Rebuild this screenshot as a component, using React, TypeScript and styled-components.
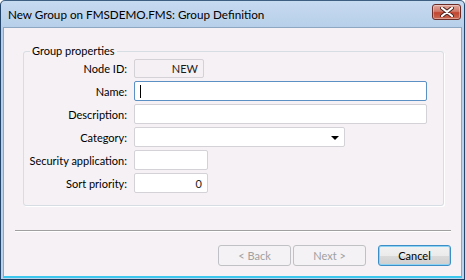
import styled, { createGlobalStyle } from 'styled-components'

const Global = createGlobalStyle`
  html, body { margin: 0; padding: 0; background: #fff; }
  body { font-family: Lato, "Noto Sans", sans-serif; font-size: 11px; color: #000; }
`

type Field = {
  label: string;
  width: number;
  value?: string;
  kind?: 'readonly' | 'focus' | 'combo' | 'number';
}

const fields: Field[] = [
  { label: 'Node ID:', width: 70, value: 'NEW', kind: 'readonly' },
  { label: 'Name:', width: 293, kind: 'focus' },
  { label: 'Description:', width: 293 },
  { label: 'Category:', width: 211, kind: 'combo' },
  { label: 'Security application:', width: 74 },
  { label: 'Sort priority:', width: 74, value: '0', kind: 'number' },
]

const App = () => (
  <>
    <Global />
    <Window>
      <TitleBar>
        <Title>New Group on FMSDEMO.FMS: Group Definition</Title>
        <CloseButton>
          <svg width="14" height="10" viewBox="0 0 14 10">
            <path d="M2 1 L12 9 M12 1 L2 9" stroke="#4a2420" strokeWidth="4" strokeLinecap="round" />
            <path d="M2 1 L12 9 M12 1 L2 9" stroke="#fff" strokeWidth="2.2" strokeLinecap="round" />
          </svg>
        </CloseButton>
      </TitleBar>
      <Client>
        <GroupBox>
          <Legend>Group properties</Legend>
          <Grid>
            {fields.map((f) => (
              <Row key={f.label}>
                <Label>{f.label}</Label>
                <Input $w={f.width} $kind={f.kind}>
                  {f.kind === 'focus' && <Caret />}
                  {f.value}
                  {f.kind === 'combo' && <Arrow />}
                </Input>
              </Row>
            ))}
          </Grid>
        </GroupBox>
        <Separator />
        <Buttons>
          <Button disabled>&lt; Back</Button>
          <Button disabled>Next &gt;</Button>
          <Button $primary>Cancel</Button>
        </Buttons>
      </Client>
    </Window>
  </>
)
export default App

const Window = styled.div`
  width: 465px;
  height: 280px;
  box-sizing: border-box;
  display: flex;
  flex-direction: column;
  background: linear-gradient(#c6daf0, #b6cee9 30px, #bcd2ea);
  border-left: 1px solid #25466b;
  border-top: 1px solid #3f5f82;
  border-right: 1px solid #25466b;
  border-bottom: 1px solid #1b3a5c;
  border-radius: 5px 5px 0 0;
  padding: 0 2px 1px 2px;
`

const TitleBar = styled.div`
  height: 26px;
  display: flex;
  align-items: center;
  justify-content: space-between;
  padding: 0 1px 0 5px;
`

const Title = styled.div`
  font-size: 11.7px;
  color: #000;
  margin-top: -1px;
`

const CloseButton = styled.div`
  width: 29px;
  height: 16px;
  margin-top: -4px;
  box-sizing: border-box;
  border: 1px solid #6b2b26;
  border-radius: 3px;
  background: linear-gradient(#e0a89c, #d0796a 45%, #c0452f 55%, #cb6a55);
  box-shadow: inset 0 0 0 1px rgba(255, 255, 255, 0.35);
  display: flex;
  align-items: center;
  justify-content: center;
`

const Client = styled.div`
  flex: 1;
  display: flex;
  flex-direction: column;
  background: #f5f1f5;
  border: 1px solid #8da6c2;
  border-bottom: 2px solid #3cc8ee;
  padding: 16px 10px 9px 11px;
`

const GroupBox = styled.fieldset`
  margin: 0 7px 0 8px;
  padding: 1px 0 12px 0;
  border: 1px solid #d6dde3;
  border-radius: 3px;
  box-shadow: 1px 1px 0 #fff;
`

const Legend = styled.legend`
  margin-left: 6px;
  padding: 0 2px;
  line-height: 14px;
  font-size: 11px;
`

const Grid = styled.div`
  display: flex;
  flex-direction: column;
  gap: 3px;
`

const Row = styled.div`
  display: grid;
  grid-template-columns: 103px auto;
  column-gap: 7px;
  align-items: center;
  justify-items: start;
`

const Label = styled.div`
  justify-self: end;
  white-space: nowrap;
`

const Input = styled.div<{ $w: number; $kind?: string }>`
  position: relative;
  width: ${(p) => p.$w}px;
  height: ${(p) => (p.$kind === 'readonly' ? 19 : 20)}px;
  box-sizing: border-box;
  border: 1px solid ${(p) => (p.$kind === 'focus' ? '#5a90c4' : '#d4d2d6')};
  border-radius: 2px;
  background: ${(p) => (p.$kind === 'readonly' ? '#f4f0f4' : '#fff')};
  display: flex;
  align-items: center;
  justify-content: ${(p) => (p.$kind === 'readonly' || p.$kind === 'number' ? 'flex-end' : 'flex-start')};
  padding: 0 5px;
  color: #1a1a1a;
`

const Caret = styled.span`
  width: 1px;
  height: 13px;
  background: #000;
`

const Arrow = styled.span`
  position: absolute;
  right: 5px;
  top: 8px;
  width: 0;
  height: 0;
  border-left: 4px solid transparent;
  border-right: 4px solid transparent;
  border-top: 4px solid #000;
`

const Separator = styled.div`
  margin: 24px 0 0 0;
  height: 1px;
  background: #a0a0a0;
  border-bottom: 1px solid #fff;
`

const Buttons = styled.div`
  display: flex;
  justify-content: flex-end;
  margin-top: 13px;
  gap: 2px;
`

const Button = styled.button<{ $primary?: boolean }>`
  width: 73px;
  height: 21px;
  box-sizing: border-box;
  font-family: inherit;
  font-size: 11px;
  padding: 0;
  border-radius: 3px;
  border: 1px solid ${(p) => (p.$primary ? '#3c8fc6' : '#bfc1c4')};
  background: ${(p) => (p.$primary ? 'linear-gradient(#f2f2f2, #ebebeb 50%, #dbdbdb 50%, #cfcfcf)' : '#f4f2f4')};
  box-shadow: ${(p) => (p.$primary ? 'inset 0 0 0 1px #8fd3f4' : 'none')};
  color: #000;
  margin-left: ${(p) => (p.$primary ? '10px' : '0')};
  &:disabled { color: #a0a0a0; }
`
